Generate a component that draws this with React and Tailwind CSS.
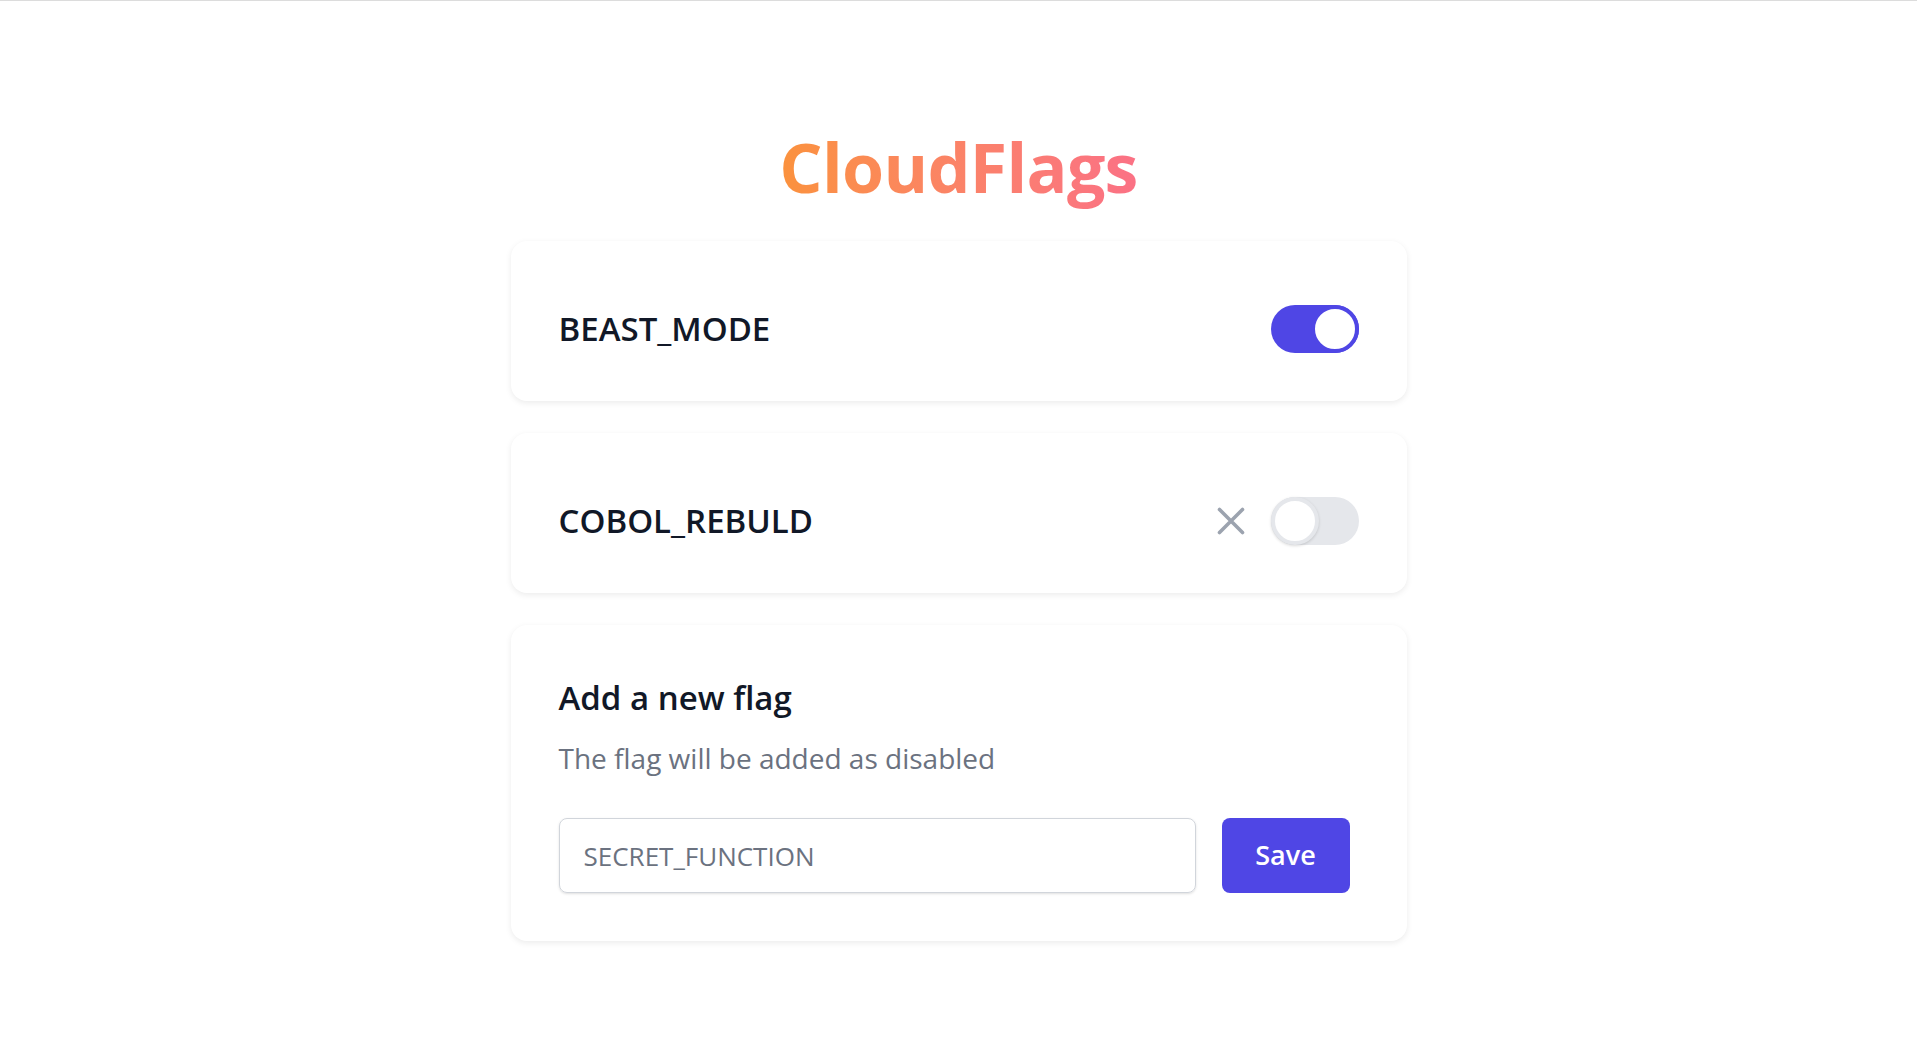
import { useState } from "react"

const FONT = { fontFamily: '"Open Sans", "Noto Sans", sans-serif' }

function Toggle({ on, onChange }) {
  return (
    <button
      type="button"
      onClick={onChange}
      className={`relative h-12 w-[88px] shrink-0 rounded-full transition-colors ${on ? "bg-[#4f46e5]" : "bg-[#e5e7eb]"}`}
      aria-pressed={on}
    >
      <span
        className={`absolute top-0 h-12 w-12 rounded-full border-4 bg-white transition-all ${
          on ? "right-0 border-[#4f46e5]" : "left-0 border-[#e5e7eb] shadow-[0_1px_3px_rgba(0,0,0,0.15)]"
        }`}
      />
    </button>
  )
}

function XIcon() {
  return (
    <svg width="28" height="28" viewBox="0 0 28 28" fill="none" stroke="#9ca3af" strokeWidth="3.6" strokeLinecap="round">
      <path d="M2.5 2.5L25.5 25.5M25.5 2.5L2.5 25.5" />
    </svg>
  )
}

function FlagCard({ name, on, onToggle }) {
  return (
    <div className="flex items-center justify-between rounded-2xl bg-white px-12 pt-16 pb-12 shadow-[0_2px_6px_rgba(0,0,0,0.08)]">
      <span className="text-[33px] font-semibold leading-10 text-[#111827]">{name}</span>
      <div className="flex items-center gap-[26px]">
        {!on && <XIcon />}
        <Toggle on={on} onChange={onToggle} />
      </div>
    </div>
  )
}

export default function App() {
  const [flags, setFlags] = useState([
    { name: "BEAST_MODE", on: true },
    { name: "COBOL_REBULD", on: false },
  ])

  const toggle = (i) => setFlags((f) => f.map((x, j) => (j === i ? { ...x, on: !x.on } : x)))

  return (
    <div className="min-h-screen border-t border-[#dcdcdc] bg-white" style={FONT}>
      <div className="mx-auto flex w-[896px] flex-col pt-[116px]">
        <h1 className="mb-[24px] self-center bg-gradient-to-r from-[#fb923c] to-[#fb7185] bg-clip-text text-[68px] font-bold leading-[100px] tracking-[-0.01em] text-transparent">
          CloudFlags
        </h1>
        <div className="flex flex-col gap-8">
          {flags.map((f, i) => (
            <FlagCard key={f.name} name={f.name} on={f.on} onToggle={() => toggle(i)} />
          ))}
          <div className="rounded-2xl bg-white px-12 pt-[53px] pb-12 shadow-[0_2px_6px_rgba(0,0,0,0.08)]">
            <h2 className="text-[33px] font-semibold leading-10 text-[#111827]">Add a new flag</h2>
            <p className="mt-[22px] text-[28px] leading-9 text-[#6b7280]">The flag will be added as disabled</p>
            <form className="mt-[42px] flex gap-[26px]" onSubmit={(e) => e.preventDefault()}>
              <input
                type="text"
                placeholder="SECRET_FUNCTION"
                className="h-[75px] w-[637px] rounded-lg border border-[#d1d5db] px-6 text-[26px] text-[#374151] shadow-sm outline-none placeholder:text-[#6b7280]"
              />
              <button
                type="submit"
                className="h-[75px] w-32 rounded-lg bg-[#4f46e5] text-[27px] font-semibold text-white"
              >
                Save
              </button>
            </form>
          </div>
        </div>
      </div>
    </div>
  )
}
